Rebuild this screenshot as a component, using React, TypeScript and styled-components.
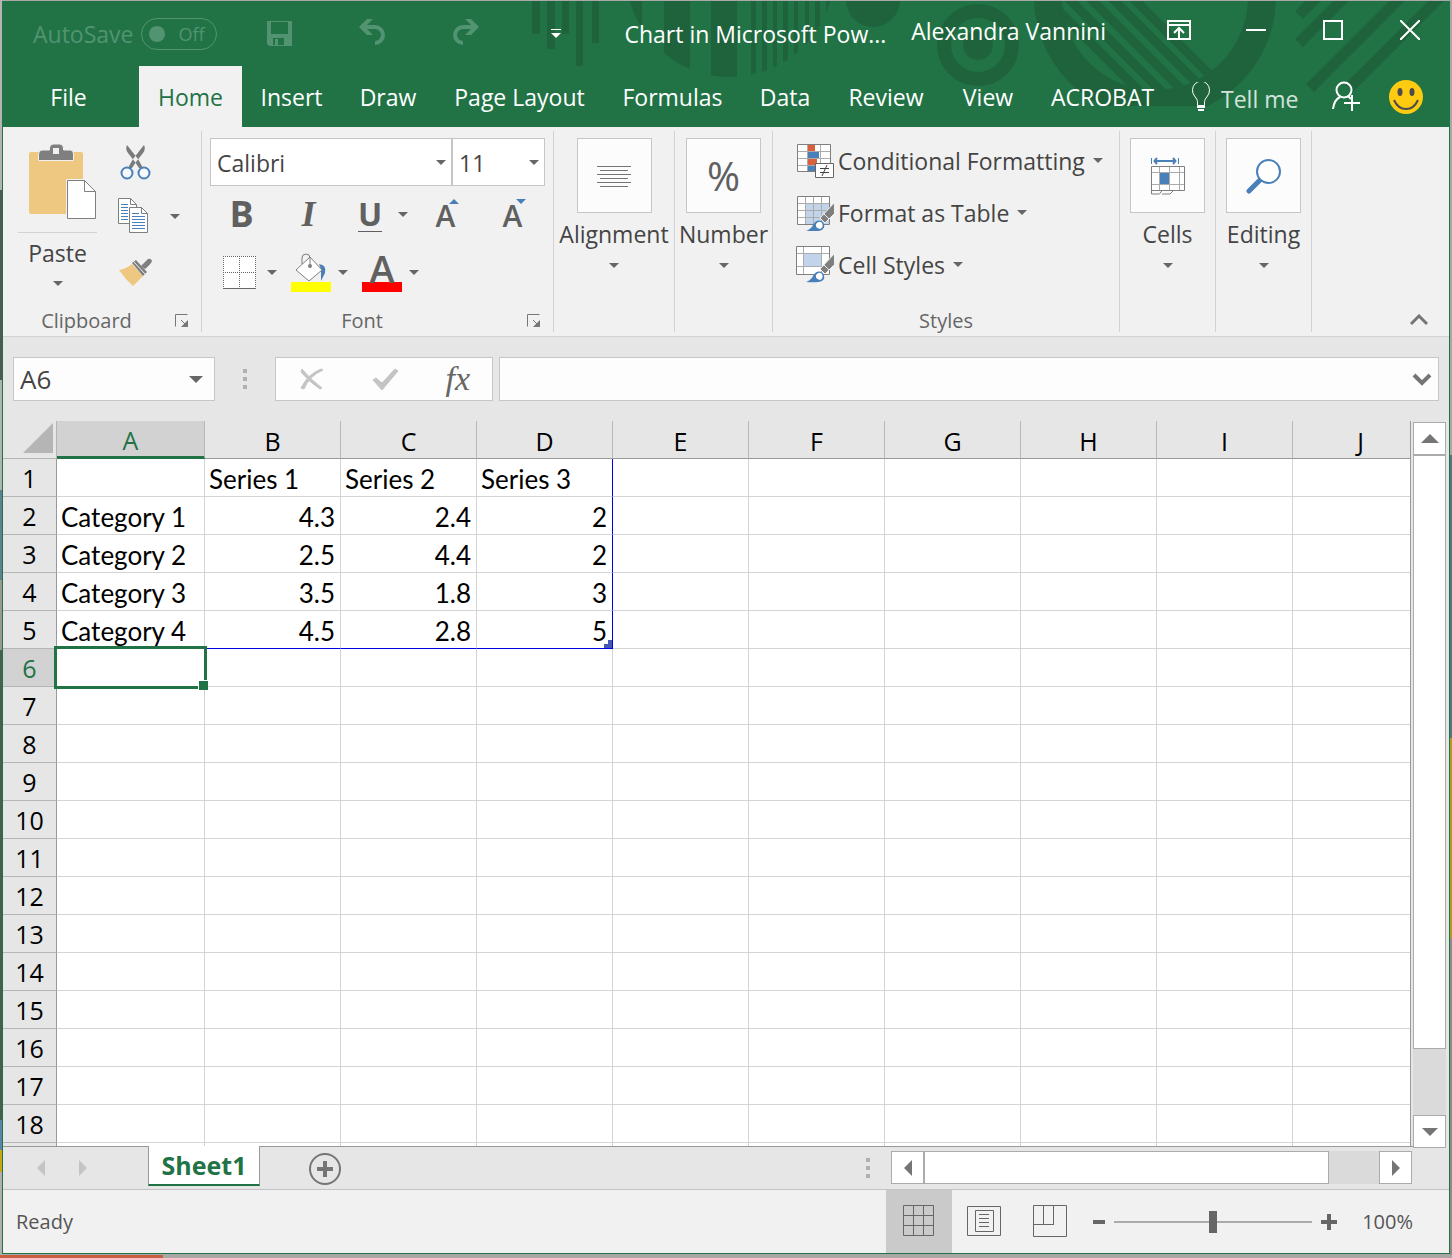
import React, { useState } from "react";
import styled, { createGlobalStyle, css } from "styled-components";

const ui = `"Open Sans", "Noto Sans", sans-serif`;
const cellFont = `Lato, "Open Sans", sans-serif`;
const green = "#217346";

const GlobalStyle = createGlobalStyle`
  * { box-sizing: border-box; }
  body { margin: 0; font-family: ${ui}; }
  button, input, select { font: inherit; color: inherit; border: 0; padding: 0; margin: 0; background: none; border-radius: 0; }
  svg { display: block; flex: none; }
`;

/* ---------- frame ---------- */

const Desktop = styled.div`
  height: 100vh;
  min-height: 700px;
  display: flex;
  padding: 1px 2px 4px;
  background:
    linear-gradient(90deg, #c8603f 0 163px, #a9a7a4 163px) bottom / 100% 3px no-repeat,
    linear-gradient(#a8a8a8 0 455px, #55757a 455px 738px, #b39b1e 738px 938px, #8f8b85 938px) right / 2px 100% no-repeat,
    linear-gradient(#b4b4b4 0 190px, #4c5a52 190px 380px, #b0b4b2 380px 490px, #5f7f93 490px 580px, #9a9a94 580px 650px, #46604f 650px 1120px, #5b86a8 1120px 1150px, #c8a614 1150px 1172px, #b0b0b0 1172px) left / 3px 100% no-repeat,
    #a9a9a9;
`;

const Window = styled.main`
  flex: 1;
  min-width: 0;
  display: flex;
  flex-direction: column;
  border: 1px solid ${green};
  border-top: 0;
  background: #e6e6e6;
  overflow: hidden;
`;

const Header = styled.header`
  position: relative;
  background: ${green};
  color: #fff;
  font-size: 23px;
`;

const Pattern = styled.svg`
  position: absolute;
  top: 0;
  right: 0;
`;

const TitleBar = styled.div`
  position: relative;
  display: flex;
  align-items: flex-start;
  height: 65px;
`;

const QuickAccess = styled.div`
  display: flex;
  align-items: center;
  height: 65px;
  padding-left: 30px;
  color: #529371;
`;

const AutoSave = styled.label`
  display: flex;
  align-items: center;
  gap: 8px;
  margin-right: 50px;
`;

const Toggle = styled.button`
  display: flex;
  align-items: center;
  gap: 13px;
  width: 76px;
  height: 32px;
  padding: 0 7px;
  border: 1px solid #529371;
  border-radius: 16px;
  font-size: 18px;

  &::before {
    content: "";
    width: 16px;
    height: 16px;
    border-radius: 8px;
    background: #529371;
  }
`;

const QuickButton = styled.button<{ $after: number }>`
  display: flex;
  margin-right: ${(p) => p.$after}px;
`;

const DocTitle = styled.h1`
  flex: 1;
  margin: 0;
  font-size: 23px;
  font-weight: 400;
  line-height: 67px;
  white-space: nowrap;
`;

const UserName = styled.span`
  line-height: 60px;
  margin-right: 61px;
  white-space: nowrap;
`;

const WindowButtons = styled.div`
  display: flex;
  align-items: center;
  height: 58px;
  padding-right: 29px;
`;

const WindowButton = styled.button<{ $before?: number }>`
  display: flex;
  margin-left: ${(p) => p.$before ?? 57}px;
`;

const TabBar = styled.nav`
  position: relative;
  display: flex;
  align-items: stretch;
  height: 61px;
`;

const Tab = styled.button<{ $width: number; $active?: boolean }>`
  width: ${(p) => p.$width}px;
  padding-top: 2px;
  white-space: nowrap;
  line-height: 59px;
  ${(p) =>
    p.$active &&
    css`
      margin-left: 5px;
      background: #f1f1f1;
      color: ${green};
    `}
`;

const TellMe = styled.button`
  display: flex;
  align-items: center;
  gap: 10px;
  margin-left: 19px;
  color: #d3e3da;
  white-space: nowrap;

  span { padding-top: 5px; }
`;

const TabActions = styled.div`
  display: flex;
  align-items: center;
  gap: 28px;
  margin-left: auto;
  padding-right: 26px;

  button { display: flex; }
`;

/* ---------- ribbon ---------- */

const RibbonBar = styled.section`
  display: flex;
  padding: 4px 0;
  height: 210px;
  background: #f1f1f1;
  border-bottom: 1px solid #d2d2d2;
  color: #444;
  font-size: 23px;
`;

const Group = styled.div<{ $width: number }>`
  display: flex;
  flex-direction: column;
  width: ${(p) => p.$width}px;
  padding-top: 7px;
  border-right: 1px solid #d2d2d2;
`;

const GroupFooter = styled.div`
  display: flex;
  align-items: center;
  margin-top: auto;
  height: 22px;
  color: #666;
  font-size: 20px;
  line-height: 22px;

  span { flex: 1; text-align: center; }
  button { display: flex; margin: 0 12px 0 5px; }
`;

const ClipboardBody = styled.div`
  display: flex;
  padding-left: 15px;
  gap: 20px;
`;

const PasteButton = styled.button`
  display: flex;
  flex-direction: column;
  align-items: center;
  width: 79px;
  padding-top: 6px;
  line-height: 28px;

  svg:first-child { align-self: flex-end; }
  hr {
    width: 100%;
    height: 1px;
    margin: 12px 0 6px;
    border: 0;
    background: #d2d2d2;
  }
  span { margin-bottom: 14px; }
`;

const ClipTools = styled.div`
  display: flex;
  flex-direction: column;
  align-items: flex-start;
  gap: 18px;
  padding-top: 7px;
`;

const Row = styled.div<{ $gap?: number; $pad?: number }>`
  display: flex;
  align-items: center;
  gap: ${(p) => p.$gap ?? 0}px;
  padding-left: ${(p) => p.$pad ?? 0}px;
`;

const PlainButton = styled.button<{ $pad?: string }>`
  display: flex;
  align-items: center;
  justify-content: center;
  padding: ${(p) => p.$pad ?? "0"};
`;

const SplitArrow = styled(PlainButton)`
  width: 24px;
  height: 30px;
  margin-right: 7px;
`;

const Combos = styled.div`
  display: flex;
  padding: 0 8px;
`;

const ComboBox = styled.div<{ $width: number }>`
  display: grid;
  align-items: center;
  width: ${(p) => p.$width}px;
  height: 48px;
  border: 1px solid #c6c6c6;
  background: #fff;

  > * { grid-area: 1 / 1; }
  > svg { justify-self: end; margin-right: 5px; pointer-events: none; }
  select { appearance: none; width: 100%; height: 46px; padding: 2px 0 0 6px; }
`;

const FontRow = styled(Row)<{ $height: number }>`
  height: ${(p) => p.$height}px;
`;

const Letter = styled.button<{ $width: number; $size?: number; $italic?: boolean; $underline?: boolean }>`
  display: flex;
  justify-content: center;
  width: ${(p) => p.$width}px;
  color: #606060;
  font-weight: 700;
  font-size: ${(p) => p.$size ?? 36}px;
  line-height: 34px;
  ${(p) => p.$italic && `font-family: "Liberation Serif", serif; font-style: italic;`}

  span { ${(p) => p.$underline && `border-bottom: 1px solid #606060;`} }
`;

const SizeLetter = styled.button`
  display: flex;
  align-items: flex-start;
  justify-content: center;
  width: 67px;
  color: #606060;
  font-size: 30px;
  font-weight: 600;

  span { line-height: 36px; padding-top: 4px; }
  svg { margin: 5px -12px 0 -6px; }
`;

const Swatch = styled.button<{ $color: string }>`
  display: flex;
  flex-direction: column;
  align-items: center;
  width: 40px;
  height: 40px;
  border-bottom: 10px solid ${(p) => p.$color};
  color: #606060;
  font-size: 38px;
  font-weight: 600;
  line-height: 32px;

  svg { margin-top: 1px; }
`;

const Collapsed = styled.button`
  display: flex;
  flex-direction: column;
  align-items: center;
  line-height: 30px;
  white-space: nowrap;
`;

const IconBox = styled.span`
  display: flex;
  align-items: center;
  justify-content: center;
  width: 75px;
  height: 75px;
  border: 1px solid #c6c6c6;
  background: #fcfcfc;
  margin-bottom: 6px;
  color: #606060;
  font-size: 40px;
`;

const CaretSlot = styled.span`
  display: flex;
  padding-top: 14px;
`;

const StyleList = styled.div`
  display: flex;
  flex-direction: column;
  align-items: flex-start;
  padding-left: 23px;
`;

const StyleButton = styled.button`
  display: flex;
  align-items: center;
  gap: 4px;
  height: 52px;
  padding-bottom: 7px;
  white-space: nowrap;

  svg:last-child { margin-left: 4px; }
`;

const CollapseRibbon = styled.button`
  display: flex;
  margin: auto 21px 6px auto;
`;

/* ---------- formula bar ---------- */

const FormulaBar = styled.section`
  display: flex;
  align-items: center;
  height: 84px;
  padding: 0 10px;
  color: #444;
`;

const FieldBox = styled.div<{ $width?: number }>`
  display: flex;
  align-items: center;
  height: 44px;
  flex: ${(p) => (p.$width ? `0 0 ${p.$width}px` : "1")};
  min-width: 0;
  border: 1px solid #c6c6c6;
  background: #fdfdfd;
  padding: 0 6px;

  input { flex: 1; min-width: 0; width: 0; height: 42px; font-size: 26px; outline: none; }
  button { display: flex; }
`;

const NameBox = styled(FieldBox)`
  padding-right: 11px;
`;

const Dots = styled.span<{ $margin: string }>`
  display: flex;
  flex-direction: column;
  gap: 4px;
  margin: ${(p) => p.$margin};

  i { width: 4px; height: 4px; background: #b0b0b0; }
`;

const FormulaActions = styled(FieldBox)`
  justify-content: space-between;
  padding: 0 22px 0 24px;
  margin-right: 6px;
`;

const FxButton = styled.button`
  font-family: "Liberation Serif", serif;
  font-style: italic;
  font-size: 34px;
  line-height: 40px;
  color: #666;
`;

/* ---------- sheet ---------- */

const Workspace = styled.section`
  flex: 1;
  min-height: 0;
  display: flex;
`;

const SheetColumn = styled.div`
  flex: 1;
  min-width: 0;
  display: flex;
  flex-direction: column;
`;

const GridView = styled.div`
  flex: 1;
  min-height: 0;
  margin-right: 2px;
  overflow: hidden;
  border-right: 1px solid #999;
`;

const Table = styled.table`
  table-layout: fixed;
  width: 1426px;
  border-collapse: separate;
  border-spacing: 0;
  background: #fff;
  color: #000;
  font-size: 25px;
  line-height: 36px;

  col { width: 136px; }
  col.rows { width: 54px; }
  col.first { width: 148px; }
`;

const Corner = styled.td`
  height: 38px;
  padding: 0 3px 3px 0;
  background: #e6e6e6;
  border-right: 1px solid #b5b5b5;
  border-bottom: 1px solid #b5b5b5;

  svg { margin-left: auto; }
`;

const ColHead = styled.th<{ $on?: boolean }>`
  height: 38px;
  padding: ${(p) => (p.$on ? 4 : 3)}px 0 0;
  font-weight: 400;
  line-height: ${(p) => (p.$on ? 31 : 34)}px;
  color: ${(p) => (p.$on ? green : "#000")};
  background: ${(p) => (p.$on ? "#d2d2d2" : "#e6e6e6")};
  border-right: 1px solid #b9b9b9;
  border-bottom: ${(p) => (p.$on ? `3px solid ${green}` : "1px solid #999")};
`;

const RowHead = styled.th<{ $on?: boolean }>`
  height: 38px;
  padding: 1px 0 0;
  font-weight: 400;
  color: ${(p) => (p.$on ? green : "#000")};
  background: ${(p) => (p.$on ? "#d2d2d2" : "#e6e6e6")};
  border-right: 1px solid #999;
  border-bottom: 1px solid #b5b5b5;
`;

const Cell = styled.td<{ $num?: boolean; $blueRight?: boolean; $blueBottom?: boolean }>`
  position: relative;
  height: 38px;
  padding: 3px 5px 0 4px;
  font-family: ${cellFont};
  font-size: 26px;
  line-height: 34px;
  white-space: nowrap;
  text-align: ${(p) => (p.$num ? "right" : "left")};
  border-right: 1px solid ${(p) => (p.$blueRight ? "#0000e0" : "#d4d4d4")};
  border-bottom: 1px solid ${(p) => (p.$blueBottom ? "#0000e0" : "#d4d4d4")};
`;

const Selection = styled.span`
  position: absolute;
  z-index: 1;
  inset: -3px;
  border: 3px solid ${green};

  &::after {
    content: "";
    position: absolute;
    right: -4px;
    bottom: -4px;
    width: 9px;
    height: 9px;
    border: 1px solid #fff;
    border-right: 0;
    border-bottom: 0;
    background: ${green};
  }
`;

const RangeHandle = styled.span`
  position: absolute;
  right: 0;
  bottom: 0;
  width: 8px;
  height: 8px;
  background: #4658b5;
  clip-path: polygon(50% 0, 100% 0, 100% 100%, 0 100%, 0 50%, 50% 50%);
`;

const VScroll = styled.div`
  display: flex;
  flex-direction: column;
  width: 36px;
  padding: 1px 3px 41px 0;
`;

const ScrollButton = styled.button`
  display: flex;
  align-items: center;
  justify-content: center;
  flex: none;
  width: 33px;
  height: 33px;
  border: 1px solid #ababab;
  background: #fff;
`;

const VTrack = styled.div`
  flex: 1;
  background: #dadada;

  div { height: 90%; border: 1px solid #ababab; background: #fff; }
`;

const SheetBar = styled.div`
  display: flex;
  align-items: flex-start;
  height: 43px;
  border-top: 1px solid #999;
  padding-right: 1px;
`;

const SheetNav = styled.div`
  display: flex;
  gap: 34px;
  width: 145px;
  padding: 13px 0 0 34px;

  button { display: flex; }
`;

const SheetTab = styled.button`
  width: 112px;
  height: 40px;
  margin-top: -1px;
  border: 1px solid #999;
  border-top: 0;
  border-bottom: 2px solid ${green};
  background: #fff;
  color: ${green};
  font-size: 25px;
  font-weight: 700;
  line-height: 37px;
`;

const AddSheet = styled.button`
  display: flex;
  margin: 6px 0 0 49px;
`;

const HScroll = styled.div`
  display: flex;
  flex: 0 1 521px;
  padding-top: 4px;
`;

const HTrack = styled.div`
  flex: 1;
  background: #dadada;

  div { width: 89%; height: 33px; border: 1px solid #ababab; border-left-color: #ababab; background: #fff; }
`;

/* ---------- status bar ---------- */

const StatusBar = styled.footer`
  display: flex;
  align-items: center;
  height: 64px;
  border-top: 1px solid #c3c3c3;
  background: #f1f1f1;
  color: #555;
  font-size: 20px;

  > span { margin: 0 auto 0 13px; }
`;

const ViewButton = styled.button<{ $on?: boolean }>`
  display: flex;
  align-items: center;
  justify-content: center;
  width: 66px;
  height: 63px;
  padding: 0 2px 2px 0;
  background: ${(p) => (p.$on ? "#cacaca" : "none")};
`;

const Zoom = styled.div`
  display: flex;
  align-items: center;
  gap: 9px;
  margin-left: 9px;

  button { display: flex; }
  output { width: 52px; margin: 0 36px 0 15px; text-align: right; }
`;

const Slider = styled.input`
  appearance: none;
  width: 198px;
  height: 22px;
  background: linear-gradient(#ababab, #ababab) center / 100% 2px no-repeat;

  &::-webkit-slider-thumb {
    appearance: none;
    width: 8px;
    height: 22px;
    background: #666;
  }
`;

/* ---------- icons ---------- */

const Caret = ({ w = 10, h = 5, color = "#666" }: { w?: number; h?: number; color?: string }) => (
  <svg width={w} height={h} viewBox="0 0 10 5" preserveAspectRatio="none">
    <path d="M0 0h10L5 5z" fill={color} />
  </svg>
);

const Arrow = ({ dir, color = "#757575", w = 8, h = 16 }: { dir: "up" | "down" | "left" | "right"; color?: string; w?: number; h?: number }) => {
  const d = {
    up: `M0 ${h}H${w}L${w / 2} 0z`,
    down: `M0 0H${w}L${w / 2} ${h}z`,
    left: `M${w} 0V${h}L0 ${h / 2}z`,
    right: `M0 0V${h}L${w} ${h / 2}z`,
  }[dir];
  return (
    <svg width={w} height={h}>
      <path d={d} fill={color} />
    </svg>
  );
};

const Launcher = () => (
  <svg width="14" height="14" fill="none" stroke="#777">
    <path d="M.5 12.500V.5H12.500M6 6l5 5" />
    <path d="M13 6v7H6z" fill="#777" stroke="none" />
  </svg>
);

const HeaderPattern = () => (
  <Pattern width="920" height="126" viewBox="529 1 920 126" aria-hidden="true">
    <defs>
      <clipPath id="disc"><circle cx="730" cy="-27" r="104" /></clipPath>
      <clipPath id="hole"><circle cx="1155" cy="-3" r="95" /></clipPath>
      <clipPath id="band"><path d="M1000 0h300v106h-300z" /></clipPath>
    </defs>
    <g fill="#1e633c">
      <path d="M532 0h8v34h-8zM547 0h8v49h-8zM562 0h7v34h-7zM576 0h7v66h-7zM592 0h7v43h-7z" />
      <path
        clipPath="url(#disc)"
        d="M620 0h22v80h-22zM664 0h26v80h-26zM711 0h26v80h-26zM751 0h5v80h-5zM762 0h5v80h-5zM773 0h4v80h-4zM783 0h5v80h-5zM794 0h4v80h-4zM805 0h4v80h-4zM815 0h5v80h-5zM826 0h5v80h-5z"
      />
      <circle cx="873" cy="0" r="27" />
      <circle cx="978" cy="45" r="15" />
    </g>
    <g fill="none" stroke="#1e633c">
      <circle cx="978" cy="45" r="34" strokeWidth="14" />
      <circle cx="1155" cy="-3" r="107" strokeWidth="28" clipPath="url(#band)" />
      <g clipPath="url(#hole)">
        <path strokeWidth="9" d="M1040-8l120 120M1062-8l120 120M1084-8l120 120M1106-8l120 120M1127-8l120 120" />
      </g>
      <path strokeWidth="11" d="M1299 15l24-24M1299 43l52-52M1310 88l97-97M1349 88l97-97" />
    </g>
  </Pattern>
);

const SaveIcon = () => (
  <svg width="25" height="25" viewBox="0 0 25 25">
    <path fillRule="evenodd" fill="#529371" d="M0 0h25v25H2l-2-2zM4 1v12h17V1zM6 17v7h2v-6h3v6h6v-7z" />
  </svg>
);

const UndoIcon = ({ flip }: { flip?: boolean }) => (
  <svg width="26" height="30" viewBox="0 0 26 30">
    <g transform={flip ? "matrix(-1 0 0 1 26 0)" : undefined}>
      <path d="M3 8h13a8 8 0 0 1 0 16" fill="none" stroke="#529371" strokeWidth="4" />
      <path d="M8 0h6L6 8l8 8H8L0 8z" fill="#529371" />
    </g>
  </svg>
);

const PasteIcon = () => (
  <svg width="68" height="76" viewBox="0 0 68 76">
    <rect y="8" width="54" height="62" rx="2" fill="#eec881" />
    <path d="M9.500 16.500V10q0-4 4-4h7V4q0-4 4-4h6q4 0 4 4v2h7q3 0 3 4v6.500z" fill="#7f7f7f" stroke="#f1f1f1" />
    <path d="M24 4h6v6h-6z" fill="#f1f1f1" />
    <path d="M38.500 36.500h17l11 11v27h-28z" fill="#fff" stroke="#7f7f7f" />
    <path d="M55.500 36.500v11h11" fill="none" stroke="#7f7f7f" />
    <path d="M37.500 75V35.500H56" fill="none" stroke="#f1f1f1" />
  </svg>
);

const CutIcon = () => (
  <svg width="32" height="35" viewBox="0 0 32 35">
    <path d="M7 0l11 14 5 9-4 0-4-6-7-9Q5 4 7 0zM24 0L13 14l-5 9 4 0 4-6 7-9Q26 4 24 0z" fill="#7a7a7a" />
    <circle cx="7" cy="28" r="5.500" fill="#f6f9fc" stroke="#4a80ba" strokeWidth="2" />
    <circle cx="24" cy="28" r="5.500" fill="#f6f9fc" stroke="#4a80ba" strokeWidth="2" />
  </svg>
);

const CopyIcon = () => (
  <svg width="32" height="36" viewBox="0 0 32 36">
    <g fill="#fff" stroke="#7f7f7f">
      <path d="M1.500 .5h12l6 6v19h-18z" />
      <path d="M12.500 9.500h12l6 6v19h-18z" />
      <path d="M13.500 .5v6h6M24.500 9.500v6h6" fill="none" />
    </g>
    <path d="M4 6.500h7M4 9.500h7M4 12.500h7M4 15.500h7M4 18.500h7M4 21.500h7M15 15.500h7M15 18.500h13M15 21.500h13M15 24.500h13M15 27.500h13M15 30.500h13" stroke="#4a80ba" />
  </svg>
);

const BrushIcon = () => (
  <svg width="36" height="30" viewBox="0 0 36 30">
    <path d="M2 13q7-1 13-6l11 12-10 10Q8 22 2 13z" fill="#eec881" />
    <path d="M15 6l4-3 11 12-4 4z" fill="#7f7f7f" />
    <path d="M24 9l7-7q3-1 4 2-1 3-7 8z" fill="#7f7f7f" />
    <path d="M17 5l11 12" stroke="#f1f1f1" />
  </svg>
);

const BordersIcon = () => (
  <svg width="33" height="33" viewBox="0 0 33 33">
    <path fill="#fff" d="M0 0h33v33H0z" />
    <path d="M0 .5h33M.5 0v32M32.500 0v32M16.500 0v32M0 16.500h33" stroke="#666" strokeDasharray="1 1" />
    <path d="M0 32.500h33" stroke="#666" />
  </svg>
);

const BucketIcon = () => (
  <svg width="32" height="28" viewBox="0 0 32 28">
    <path d="M24 11q8 1 6 9l-4 8V16z" fill="#4a80ba" />
    <path d="M1 17L15 4l12 13-13 11z" fill="#fff" stroke="#7f7f7f" />
    <path d="M7 11V5q0-4 4-4t4 4v7" fill="none" stroke="#7f7f7f" />
    <circle cx="15" cy="13" r="2" fill="#7f7f7f" />
  </svg>
);

const AlignIcon = () => (
  <svg width="34" height="24" viewBox="0 0 34 24">
    <path d="M0 2.500h34M3 6.500h28M0 10.500h34M3 14.500h28M0 18.500h34M3 22.500h28" stroke="#757575" />
  </svg>
);

const CondIcon = () => (
  <svg width="38" height="36" viewBox="0 0 38 36">
    <path d="M1.500 1.500h33v27h-33z" fill="#fff" stroke="#7f7f7f" />
    <path d="M2 8.500h32M2 15.500h32M2 22.500h32M11.500 2v26M24.500 2v26" stroke="#ababab" />
    <path d="M12 2h7v6h-7zM12 16h9v6h-9z" fill="#d9603b" />
    <path d="M12 9h11v6H12zM12 23h7v5h-7z" fill="#4a80ba" />
    <path d="M19.500 20.500h18v14h-18z" fill="#fff" stroke="#666" />
    <path d="M24 25.500h9M24 29.500h9M31 22l-5 11" stroke="#444" />
  </svg>
);

const PaintBrush = () => (
  <>
    <path d="M39 7v11L29 28l-5-5z" fill="#7f7f7f" stroke="#f1f1f1" />
    <path d="M28 19l5 5" stroke="#f1f1f1" />
    <path d="M10 36q5-2 7-6 4-7 10-3 3 5-1 8-4 2-16 1z" fill="#4a80ba" />
    <path d="M20 29q3-4 6-1 2 4-2 6-5-1-4-5z" fill="#fff" />
  </>
);

const FormatTableIcon = () => (
  <svg width="38" height="36" viewBox="0 0 38 36">
    <path d="M1.500 1.500h32v28h-32z" fill="#fff" />
    <path d="M10 9h23v20H10z" fill="#c2d4e9" />
    <path d="M2 8.500h32M2 15.500h32M2 22.500h32M9.500 2v27M17.500 2v27M25.500 2v27" stroke="#ababab" />
    <path d="M1.500 1.500h32v28h-32z" fill="none" stroke="#7f7f7f" />
    <PaintBrush />
  </svg>
);

const CellStylesIcon = () => (
  <svg width="38" height="38" viewBox="0 0 38 38">
    <path d="M.5.5h33v28H.5z" fill="#fff" />
    <path d="M8 8h18v12H8z" fill="#c2d4e9" />
    <path d="M1 7.500h32M1 20.500h32M7.500 1v27M25.500 1v27" stroke="#ababab" />
    <path d="M.5.5h33v28H.5z" fill="none" stroke="#7f7f7f" />
    <PaintBrush />
  </svg>
);

const CellsIcon = () => (
  <svg width="34" height="38" viewBox="0 0 34 38">
    <path d="M0 9h34v24H0z" fill="#fff" />
    <path d="M0 15.500h34M0 27.500h34M8.500 9v24M18.500 9v24M28.500 9v24" stroke="#ababab" />
    <path d="M9 16h9v11H9z" fill="#4a80ba" />
    <path d="M.5 9.500h33v24H.5zM.5 33v4h8l3-4M11 37h8l4-4" fill="none" stroke="#7f7f7f" />
    <path d="M.5 1v6M27.500 1v6" stroke="#4a80ba" />
    <path d="M5 4h18M6 1L3.500 4 6 7M22 1l2.500 3L22 7" fill="none" stroke="#4a80ba" strokeWidth="2" />
  </svg>
);

const SearchIcon = () => (
  <svg width="36" height="36" viewBox="0 0 36 36">
    <path d="M3 33l12-12" stroke="#4a80ba" strokeWidth="5" strokeLinecap="round" />
    <circle cx="22.500" cy="13.500" r="11.500" fill="#fff" stroke="#4a80ba" strokeWidth="2" />
  </svg>
);

const BulbIcon = () => (
  <svg width="20" height="29" viewBox="0 0 20 29" fill="none" stroke="#fff">
    <path d="M6.500 23.500v-4q0-2-3-5.500a8.500 9 0 1 1 13 0q-3 3.500-3 5.500v4z" />
    <path d="M6 25h8M7 28h6" strokeWidth="2" />
  </svg>
);

const ShareIcon = () => (
  <svg width="29" height="31" viewBox="0 0 29 31" fill="none" stroke="#fff" strokeWidth="2">
    <circle cx="12" cy="9" r="7.500" />
    <path d="M1 28q1-9 7-12M16 15l3 3M12 22h16M20 14v16" />
  </svg>
);

const Smiley = () => (
  <svg width="34" height="34" viewBox="0 0 34 34">
    <circle cx="17" cy="17" r="17" fill="#ffcb10" />
    <ellipse cx="11" cy="12" rx="2.500" ry="4" fill="#4b4b4b" />
    <ellipse cx="23" cy="12" rx="2.500" ry="4" fill="#4b4b4b" />
    <path d="M5 20q4 9 12 9t12-9" fill="none" stroke="#4b4b4b" strokeWidth="2" />
  </svg>
);

/* ---------- data ---------- */

const tabs: [string, number][] = [
  ["File", 131],
  ["Home", 103],
  ["Insert", 99],
  ["Draw", 94],
  ["Page Layout", 169],
  ["Formulas", 137],
  ["Data", 88],
  ["Review", 114],
  ["View", 90],
  ["ACROBAT", 139],
];

const columns = ["A", "B", "C", "D", "E", "F", "G", "H", "I", "J"];

const data: (string | number)[][] = [
  ["", "Series 1", "Series 2", "Series 3"],
  ["Category 1", 4.3, 2.4, 2],
  ["Category 2", 2.5, 4.4, 2],
  ["Category 3", 3.5, 1.8, 3],
  ["Category 4", 4.5, 2.8, 5],
];

const rowCount = 18;

/* ---------- parts ---------- */

const TitleRow = () => (
  <TitleBar>
    <QuickAccess>
      <AutoSave>
        AutoSave
        <Toggle role="switch" aria-checked="false">Off</Toggle>
      </AutoSave>
      <QuickButton $after={67} aria-label="Save"><SaveIcon /></QuickButton>
      <QuickButton $after={68} aria-label="Undo"><UndoIcon /></QuickButton>
      <QuickButton $after={72} aria-label="Redo"><UndoIcon flip /></QuickButton>
      <QuickButton $after={63} aria-label="Customize toolbar">
        <svg width="10" height="10"><path d="M0 .5h10" stroke="#fff" /><path d="M0 4h10L5 9z" fill="#fff" /></svg>
      </QuickButton>
    </QuickAccess>
    <DocTitle>Chart in Microsoft Pow...</DocTitle>
    <UserName>Alexandra Vannini</UserName>
    <WindowButtons>
      <WindowButton $before={0} aria-label="Ribbon options">
        <svg width="24" height="20" fill="none" stroke="#fff" strokeWidth="2">
          <path d="M1 1h22v18H1zM1 5h22M12 18V9M7 13l5-5 5 5" />
        </svg>
      </WindowButton>
      <WindowButton $before={55} aria-label="Minimize">
        <svg width="20" height="20"><path d="M0 10h20" stroke="#fff" strokeWidth="2" /></svg>
      </WindowButton>
      <WindowButton aria-label="Maximize">
        <svg width="20" height="20"><path d="M1 1h18v18H1z" fill="none" stroke="#fff" strokeWidth="2" /></svg>
      </WindowButton>
      <WindowButton aria-label="Close">
        <svg width="20" height="20"><path d="M0 0l20 20M20 0L0 20" stroke="#fff" strokeWidth="2" /></svg>
      </WindowButton>
    </WindowButtons>
  </TitleBar>
);

const CollapsedGroup = ({ name, width, children }: { name: string; width: number; children: React.ReactNode }) => (
  <Group $width={width}>
    <Collapsed>
      <IconBox>{children}</IconBox>
      {name}
      <CaretSlot><Caret /></CaretSlot>
    </Collapsed>
  </Group>
);

const Combo = ({ label, value, width }: { label: string; value: string; width: number }) => (
  <ComboBox $width={width}>
    <select aria-label={label}>
      <option>{value}</option>
    </select>
    <Caret />
  </ComboBox>
);

const Ribbon = () => (
  <RibbonBar>
    <Group $width={199}>
      <ClipboardBody>
        <PasteButton>
          <PasteIcon />
          <hr />
          <span>Paste</span>
          <Caret />
        </PasteButton>
        <ClipTools>
          <PlainButton aria-label="Cut" $pad="0 0 0 3px"><CutIcon /></PlainButton>
          <Row $gap={21}>
            <PlainButton aria-label="Copy"><CopyIcon /></PlainButton>
            <PlainButton aria-label="Copy options"><Caret /></PlainButton>
          </Row>
          <PlainButton aria-label="Format painter" $pad="5px 0 0"><BrushIcon /></PlainButton>
        </ClipTools>
      </ClipboardBody>
      <GroupFooter><span>Clipboard</span><button aria-label="Clipboard settings"><Launcher /></button></GroupFooter>
    </Group>

    <Group $width={352}>
      <Combos>
        <Combo label="Font" value="Calibri" width={242} />
        <Combo label="Font size" value="11" width={93} />
      </Combos>
      <FontRow $pad={6} $height={56}>
        <Letter $width={67}>B</Letter>
        <Letter $width={67} $italic>I</Letter>
        <Letter $width={56} $underline $size={32}><span>U</span></Letter>
        <PlainButton aria-label="Underline style"><Caret /></PlainButton>
        <SizeLetter aria-label="Increase font size"><span>A</span><Arrow dir="up" w={10} h={5} color="#4a80ba" /></SizeLetter>
        <SizeLetter aria-label="Decrease font size"><span>A</span><Arrow dir="down" w={10} h={5} color="#4a80ba" /></SizeLetter>
      </FontRow>
      <FontRow $pad={17} $height={60}>
        <PlainButton aria-label="Borders" $pad="0 4px"><BordersIcon /></PlainButton>
        <SplitArrow aria-label="Border style"><Caret /></SplitArrow>
        <Swatch $color="#ffff00" aria-label="Fill color"><BucketIcon /></Swatch>
        <SplitArrow aria-label="Fill options"><Caret /></SplitArrow>
        <Swatch $color="#ff0000">A</Swatch>
        <SplitArrow aria-label="Font color options"><Caret /></SplitArrow>
      </FontRow>
      <GroupFooter><span>Font</span><button aria-label="Font settings"><Launcher /></button></GroupFooter>
    </Group>

    <CollapsedGroup name="Alignment" width={121}><AlignIcon /></CollapsedGroup>
    <CollapsedGroup name="Number" width={98}>%</CollapsedGroup>

    <Group $width={347}>
      <StyleList>
        <StyleButton><CondIcon />Conditional Formatting<Caret /></StyleButton>
        <StyleButton><FormatTableIcon />Format as Table<Caret /></StyleButton>
        <StyleButton><CellStylesIcon />Cell Styles<Caret /></StyleButton>
      </StyleList>
      <GroupFooter><span>Styles</span></GroupFooter>
    </Group>

    <CollapsedGroup name="Cells" width={96}><CellsIcon /></CollapsedGroup>
    <CollapsedGroup name="Editing" width={96}><SearchIcon /></CollapsedGroup>

    <CollapseRibbon aria-label="Collapse ribbon">
      <svg width="18" height="12"><path d="M1 10l8-8 8 8" fill="none" stroke="#757575" strokeWidth="3" /></svg>
    </CollapseRibbon>
  </RibbonBar>
);

const DragDots = ({ margin }: { margin: string }) => <Dots $margin={margin}><i /><i /><i /></Dots>;

const Formula = () => (
  <FormulaBar>
    <NameBox $width={202}>
      <input aria-label="Name box" defaultValue="A6" />
      <button aria-label="Named ranges"><Caret w={14} h={7} /></button>
    </NameBox>
    <DragDots margin="0 28px" />
    <FormulaActions $width={218}>
      <button aria-label="Cancel">
        <svg width="24" height="22"><path d="M2 1q8 10 20 19l-2 1Q8 13 1 4zM23 2Q9 8 4 21l-3-1Q8 6 21 1z" fill="#c4c4c4" stroke="#c4c4c4" /></svg>
      </button>
      <button aria-label="Enter">
        <svg width="26" height="22"><path d="M1 12l3-2 6 5L23 1l3 2-16 19z" fill="#c4c4c4" stroke="#c4c4c4" /></svg>
      </button>
      <FxButton aria-label="Insert function">fx</FxButton>
    </FormulaActions>
    <FieldBox>
      <input aria-label="Formula" />
      <button aria-label="Expand formula bar">
        <svg width="20" height="13"><path d="M2 2l8 8 8-8" fill="none" stroke="#757575" strokeWidth="4" /></svg>
      </button>
    </FieldBox>
  </FormulaBar>
);

const Grid = () => (
  <GridView>
    <Table>
      <colgroup>
        <col className="rows" />
        <col className="first" />
        {columns.slice(1).map((c) => <col key={c} />)}
      </colgroup>
      <thead>
        <tr>
          <Corner><svg width="30" height="30"><path d="M30 0v30H0z" fill="#b5b5b5" /></svg></Corner>
          {columns.map((c) => <ColHead key={c} scope="col" $on={c === "A"}>{c}</ColHead>)}
        </tr>
      </thead>
      <tbody>
        {Array.from({ length: rowCount }, (_, r) => (
          <tr key={r}>
            <RowHead scope="row" $on={r === 5}>{r + 1}</RowHead>
            {columns.map((c, i) => {
              const value = data[r]?.[i] ?? "";
              return (
                <Cell
                  key={c}
                  $num={typeof value === "number"}
                  $blueRight={i === 3 && r < 5}
                  $blueBottom={r === 4 && i < 4}
                >
                  {value}
                  {r === 5 && i === 0 && <Selection />}
                  {r === 4 && i === 3 && <RangeHandle />}
                </Cell>
              );
            })}
          </tr>
        ))}
        <tr>
          <RowHead aria-hidden="true" />
          {columns.map((c) => <Cell key={c} />)}
        </tr>
      </tbody>
    </Table>
  </GridView>
);

const Status = () => {
  const [zoom, setZoom] = useState(100);
  return (
    <StatusBar>
      <span>Ready</span>
      <ViewButton $on aria-label="Normal view">
        <svg width="31" height="31" fill="none" stroke="#666"><path d="M.5.5h30v30H.5zM10.500 0v31M20.500 0v31M0 10.500h31M0 20.500h31" /></svg>
      </ViewButton>
      <ViewButton aria-label="Page layout view">
        <svg width="34" height="30" fill="none" stroke="#666"><path d="M.5.5h33v29H.5zM8.500 4.500h18v21h-18zM12 8.500h10M12 12.500h10M12 16.500h10M12 20.500h10" /></svg>
      </ViewButton>
      <ViewButton aria-label="Page break view">
        <svg width="34" height="32" fill="none" stroke="#666"><path d="M.5.5h33v31H.5zM10.500 0v20M20.500 0v20M0 19.500h21" /></svg>
      </ViewButton>
      <Zoom>
        <button aria-label="Zoom out"><svg width="12" height="16"><path d="M0 8h12" stroke="#666" strokeWidth="4" /></svg></button>
        <Slider type="range" aria-label="Zoom" min={0} max={200} value={zoom} onChange={(e) => setZoom(Number(e.target.value))} />
        <button aria-label="Zoom in"><svg width="16" height="16"><path d="M0 8h16M8 0v16" stroke="#666" strokeWidth="4" /></svg></button>
        <output>{zoom}%</output>
      </Zoom>
    </StatusBar>
  );
};

export default function App() {
  return (
    <Desktop>
      <GlobalStyle />
      <Window>
        <Header>
          <HeaderPattern />
          <TitleRow />
          <TabBar>
            {tabs.map(([name, width]) => (
              <Tab key={name} $width={width} $active={name === "Home"}>{name}</Tab>
            ))}
            <TellMe><BulbIcon /><span>Tell me</span></TellMe>
            <TabActions>
              <button aria-label="Share"><ShareIcon /></button>
              <button aria-label="Feedback"><Smiley /></button>
            </TabActions>
          </TabBar>
        </Header>
        <Ribbon />
        <Formula />
        <Workspace>
          <SheetColumn>
            <Grid />
            <SheetBar>
              <SheetNav>
                <button aria-label="Previous sheet"><Arrow dir="left" color="#c4c4c4" /></button>
                <button aria-label="Next sheet"><Arrow dir="right" color="#c4c4c4" /></button>
              </SheetNav>
              <SheetTab>Sheet1</SheetTab>
              <AddSheet aria-label="New sheet">
                <svg width="32" height="32" fill="none" stroke="#757575">
                  <circle cx="16" cy="16" r="15" strokeWidth="2" />
                  <path d="M8 16h16M16 8v16" strokeWidth="4" />
                </svg>
              </AddSheet>
              <DragDots margin="11px 21px 0 auto" />
              <HScroll>
                <ScrollButton aria-label="Scroll left"><Arrow dir="left" /></ScrollButton>
                <HTrack><div /></HTrack>
                <ScrollButton aria-label="Scroll right"><Arrow dir="right" /></ScrollButton>
              </HScroll>
            </SheetBar>
          </SheetColumn>
          <VScroll>
            <ScrollButton aria-label="Scroll up"><Arrow dir="up" w={18} h={9} /></ScrollButton>
            <VTrack><div /></VTrack>
            <ScrollButton aria-label="Scroll down"><Arrow dir="down" w={16} h={8} /></ScrollButton>
          </VScroll>
        </Workspace>
        <Status />
      </Window>
    </Desktop>
  );
}
